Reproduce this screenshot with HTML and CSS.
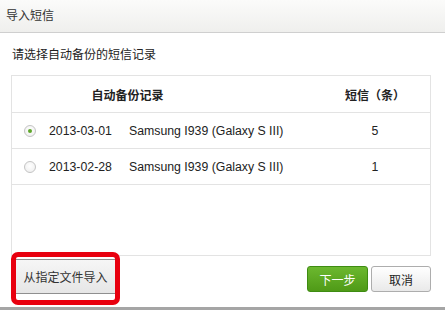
FILE: index.html
```html
<!DOCTYPE html>
<html lang="zh">
<head>
<meta charset="utf-8">
<link rel="stylesheet" href="styles.css">
</head>
<body>
<div class="dialog">
  <div class="titlebar">导入短信</div>
  <div class="prompt">请选择自动备份的短信记录</div>
  <div class="table">
    <div class="head">
      <span class="h-rec">自动备份记录</span>
      <span></span>
      <span class="h-num">短信（条）</span>
    </div>
    <div class="row">
      <span></span>
      <span class="radio on"></span>
      <span></span>
      <span class="date">2013-03-01</span>
      <span class="name">Samsung I939 (Galaxy S III)</span>
      <span class="num">5</span>
    </div>
    <div class="row">
      <span></span>
      <span class="radio"></span>
      <span></span>
      <span class="date">2013-02-28</span>
      <span class="name">Samsung I939 (Galaxy S III)</span>
      <span class="num">1</span>
    </div>
  </div>
  <div class="footer">
    <button class="btn btn-file">从指定文件导入</button>
    <span class="spacer"></span>
    <button class="btn btn-primary">下一步</button>
    <button class="btn btn-cancel">取消</button>
  </div>
  <div class="highlight"></div>
</div>
</body>
</html>
```

FILE: styles.css
```css
* { box-sizing: border-box; }
html, body { margin: 0; padding: 0; background: #fff; }
body {
  width: 445px;
  height: 310px;
  overflow: hidden;
  font-family: "Noto Sans CJK SC", "Liberation Sans", sans-serif;
  font-size: 12px;
  color: #333;
}
.dialog {
  position: relative;
  width: 445px;
  height: 310px;
  background: #fff;
  border-bottom: 3px solid #a5a5a5;
}
.titlebar {
  height: 33px;
  line-height: 30px;
  padding-left: 6px;
  font-size: 12px;
  color: #333;
  background: linear-gradient(#fbfbfa, #efefed);
  border-bottom: 1px solid #cfcfcf;
}
.prompt {
  height: 42px;
  padding: 13px 0 0 12px;
  line-height: 16px;
  color: #222;
}
.table {
  margin-left: 11px;
  width: 420px;
  height: 181px;
  border: 1px solid #e3e3e3;
}
.head {
  display: grid;
  grid-template-columns: 231px 77px 110px;
  height: 37px;
  align-items: center;
  border-bottom: 1px solid #e3e3e3;
  font-weight: bold;
  color: #222;
}
.h-rec, .h-num { text-align: center; }
.row {
  display: grid;
  grid-template-columns: 12px 12px 13px 80px 191px 110px;
  height: 36px;
  align-items: center;
  border-bottom: 1px solid #e3e3e3;
  font-family: "Liberation Sans", Arial, sans-serif;
  font-size: 12.3px;
  color: #222;
}
.num { text-align: center; }
.radio {
  width: 12px;
  height: 12px;
  border-radius: 50%;
  border: 1px solid #c4c4c4;
  background: radial-gradient(circle at 50% 40%, #ffffff, #ececec);
  position: relative;
}
.radio.on::after {
  content: "";
  position: absolute;
  left: 3px;
  top: 3px;
  width: 4px;
  height: 4px;
  border-radius: 50%;
  background: #5ea62a;
}
.footer {
  display: flex;
  align-items: flex-start;
  padding: 0 14px 0 14px;
  height: 51px;
}
.spacer { flex: 1; }
.btn {
  font-family: "Noto Sans CJK SC", sans-serif;
  font-size: 12px;
  padding: 0;
  margin: 0;
  cursor: pointer;
}
.btn-file {
  margin-top: 3px;
  width: 103px;
  height: 35px;
  border: 1px solid #8f8f8f;
  background: linear-gradient(#f6f6f6, #e6e6e6);
  color: #333;
}
.btn-primary {
  margin-top: 10px;
  width: 61px;
  height: 26px;
  border: 1px solid #3e8c12;
  border-radius: 3px;
  background: linear-gradient(#6cb82f, #4f9a17);
  color: #fff;
}
.btn-cancel {
  margin-top: 10px;
  margin-left: 3px;
  width: 60px;
  height: 26px;
  border: 1px solid #adadad;
  border-radius: 3px;
  background: linear-gradient(#ffffff, #e9e9e9);
  color: #222;
}
.highlight {
  position: absolute;
  left: 11px;
  top: 252px;
  width: 109px;
  height: 53px;
  border: 5px solid #e8000f;
  border-radius: 7px;
}
```
